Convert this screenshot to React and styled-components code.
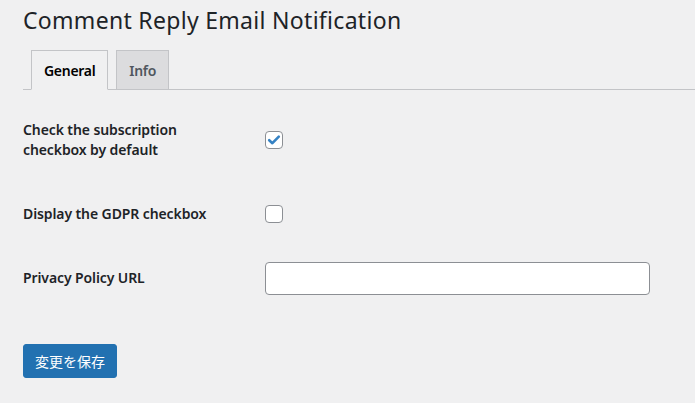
import React from 'react'
import styled, { createGlobalStyle } from 'styled-components'

const GlobalStyle = createGlobalStyle`
  html, body {
    margin: 0;
    padding: 0;
    background: #f0f0f1;
  }
  body {
    font-family: "Noto Sans", "Noto Sans CJK JP", sans-serif;
    color: #1d2327;
  }
`

const Wrap = styled.div`
  padding: 0 0 0 23px;
`

const Title = styled.h1`
  margin: 0;
  padding: 6px 0 0;
  font-size: 23px;
  font-weight: 400;
  line-height: 29px;
  letter-spacing: 0.3px;
  color: #1d2327;
`

const TabBar = styled.nav`
  display: flex;
  align-items: flex-end;
  margin-top: 15px;
  padding-left: 8px;
  border-bottom: 1px solid #c3c4c7;
`

const Tab = styled.a`
  display: flex;
  align-items: center;
  box-sizing: border-box;
  height: 40px;
  margin-bottom: -1px;
  margin-right: 8px;
  padding: 0 12px;
  border: 1px solid #c3c4c7;
  border-bottom-color: ${p => (p.$active ? '#f0f0f1' : '#c3c4c7')};
  background: ${p => (p.$active ? '#f0f0f1' : '#dcdcde')};
  color: ${p => (p.$active ? '#000' : '#50575e')};
  font-size: 14px;
  font-weight: 600;
  letter-spacing: -0.3px;
  text-decoration: none;
`

const Form = styled.form`
  display: flex;
  flex-direction: column;
  padding-top: 10px;
`

const Row = styled.div`
  display: grid;
  grid-template-columns: 242px 1fr;
  align-items: center;
  height: ${p => p.$h}px;
`

const Label = styled.label`
  font-size: 14px;
  font-weight: 600;
  line-height: 20px;
  letter-spacing: -0.1px;
  color: #1d2327;
`

const Box = styled.span`
  display: flex;
  align-items: center;
  justify-content: center;
  box-sizing: border-box;
  width: 18px;
  height: 18px;
  border: 1px solid #8c8f94;
  border-radius: 4px;
  background: #fff;
`

const TextInput = styled.input`
  box-sizing: border-box;
  width: 385px;
  height: 33px;
  margin: 0;
  border: 1px solid #8c8f94;
  border-radius: 4px;
  background: #fff;
  font-size: 14px;
`

const Submit = styled.button`
  align-self: flex-start;
  box-sizing: border-box;
  height: 34px;
  margin-top: 36px;
  padding: 0 11px;
  border: 1px solid #2271b1;
  border-radius: 3px;
  background: #2271b1;
  color: #fff;
  font-family: "Noto Sans CJK JP", sans-serif;
  font-size: 14px;
  cursor: pointer;
`

const Checkbox = ({ checked }) => (
  <Box>
    {checked && (
      <svg width="14" height="14" viewBox="0 0 14 14">
        <path d="M2.2 7.2 L5.4 10.2 L11.8 3.6" fill="none" stroke="#3582c4" strokeWidth="2.6" strokeLinecap="round" strokeLinejoin="round" />
      </svg>
    )}
  </Box>
)

export default function App() {
  return (
    <Wrap>
      <GlobalStyle />
      <Title>Comment Reply Email Notification</Title>
      <TabBar>
        <Tab href="#" $active>General</Tab>
        <Tab href="#">Info</Tab>
      </TabBar>
      <Form onSubmit={e => e.preventDefault()}>
        <Row $h={80}>
          <Label>Check the subscription<br />checkbox by default</Label>
          <Checkbox checked />
        </Row>
        <Row $h={68}>
          <Label>Display the GDPR checkbox</Label>
          <Checkbox />
        </Row>
        <Row $h={60}>
          <Label>Privacy Policy URL</Label>
          <TextInput type="text" />
        </Row>
        <Submit type="submit">変更を保存</Submit>
      </Form>
    </Wrap>
  )
}
